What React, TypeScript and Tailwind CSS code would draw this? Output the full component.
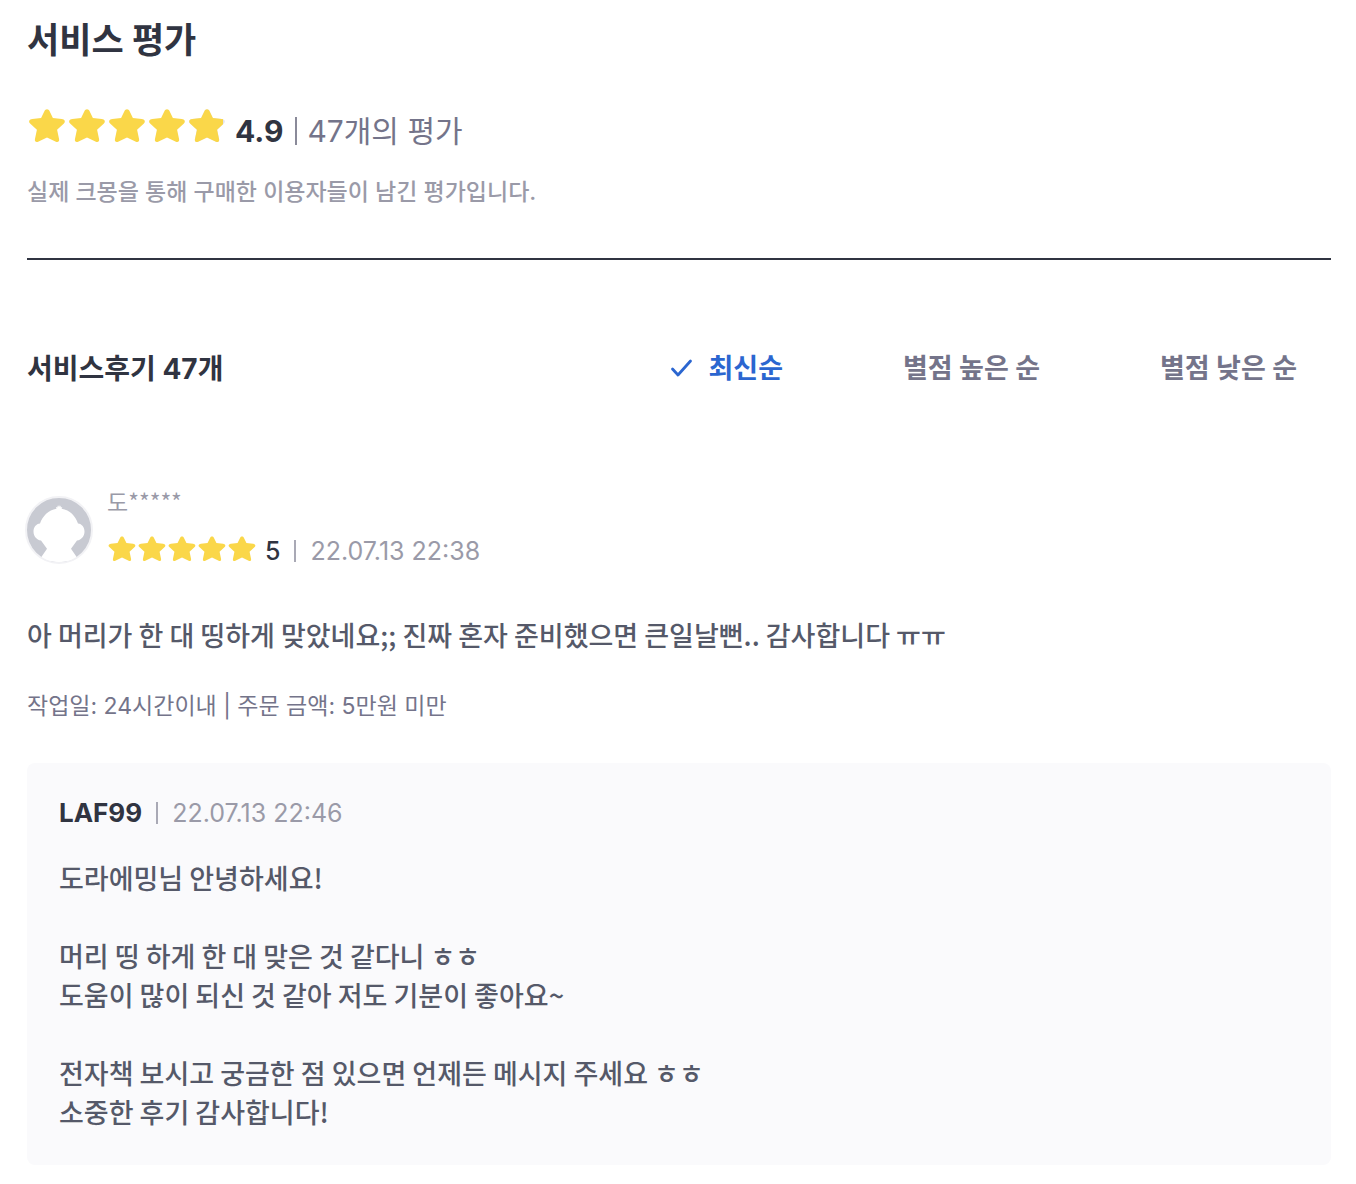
import { useState } from 'react'
import clsx from 'clsx'

const SORTS = [
  { id: 'latest', label: '최신순' },
  { id: 'high', label: '별점 높은 순' },
  { id: 'low', label: '별점 낮은 순' },
]

const REPLY = `도라에밍님 안녕하세요!

머리 띵 하게 한 대 맞은 것 같다니 ㅎㅎ
도움이 많이 되신 것 같아 저도 기분이 좋아요~

전자책 보시고 궁금한 점 있으면 언제든 메시지 주세요 ㅎㅎ
소중한 후기 감사합니다!`

const STAR =
  'M20 3.2c1.2 0 2 .7 2.5 1.8l3.4 7 8.9 1c2.7.3 4.1 2.4 2.100 4.400l-6.800 6.400 2 9.500c.4 2.300-1.300 3.400-3.200 2.500L20 31.400l-8.900 4.400c-1.900.9-3.600-.2-3.200-2.500l2-9.500-6.800-6.400c-2-2-.6-4.100 2.100-4.400l8.900-1L17.500 5c.5-1.100 1.300-1.800 2.500-1.800z'

function Stars({ score, className }: { score: number; className: string }) {
  return (
    <svg viewBox="0 0 200 40" className={className} role="img" aria-label={`별점 ${score}`}>
      <defs>
        <clipPath id={`score-${score}`}>
          <rect width={score * 40} height="40" />
        </clipPath>
      </defs>
      {score < 5 && <path d={STAR} transform="translate(160 0)" fill="#e4e5ed" />}
      <g clipPath={`url(#score-${score})`}>
        {[0, 1, 2, 3, 4].map((i) => (
          <path key={i} d={STAR} transform={`translate(${i * 40} 0)`} fill="#fad749" />
        ))}
      </g>
    </svg>
  )
}

function Avatar() {
  return (
    <svg viewBox="0 0 68 68" className="mt-1.5 -ml-0.5 size-[68px] shrink-0" aria-hidden="true">
      <circle cx="34" cy="34" r="33" fill="#c8cad2" />
      <path
        d="M16 61.5l6-8.700-6-8.300C11.500 44 8.500 40 8.500 35.500c0-4.200 2.500-7.500 6.500-8C17.500 20 23.500 14 31.500 12.700l-.6-1.700 1.500.6.3-2 .8 1.200.5-2.300.6 2.300.9-1.200.3 2 1.500-.6-.7 1.700C45 14 50.500 20 53 27.500c4 .5 6.500 3.800 6.500 8 0 4.500-3 8.500-7.500 9L46 52.800l6 8.700c-8 6-28 6-36 0z"
        fill="#fff"
      />
      <circle cx="34" cy="34" r="33" fill="none" stroke="#f2f2f5" strokeWidth="2" />
    </svg>
  )
}

function Divider() {
  return <span className="mx-3.5 h-[22px] w-0.5 bg-[#a9a9b5]" />
}

export default function App() {
  const [sort, setSort] = useState('latest')

  return (
    <main className="bg-white px-[27px] pt-4 pr-[25px] pb-[19px] font-['Inter','Noto_Sans_CJK_KR',sans-serif] text-[#303441]">
      <h1 className="text-[35px] leading-12 font-bold">서비스 평가</h1>

      <div className="mt-[42px] flex items-center text-[30px] leading-12">
        <Stars score={4.9} className="mb-2.5 h-10 w-[200px]" />
        <strong className="ml-2 font-bold">4.9</strong>
        <span className="mr-2.5 ml-3 h-7 w-0.5 bg-[#8a8a99]" />
        <span className="text-[#74748a]">47개의 평가</span>
      </div>
      <p className="mt-[18px] text-[23px] leading-9 font-medium text-[#9a9aa8]">
        실제 크몽을 통해 구매한 이용자들이 남긴 평가입니다.
      </p>

      <hr className="mt-12 border-t-2 border-[#303441]" />

      <div className="mt-[89px] flex items-center justify-between leading-10 font-bold">
        <h2 className="text-[28px]">서비스후기 47개</h2>
        <div className="mr-[34px] flex gap-[120px] text-[27px]">
          {SORTS.map((s) => (
            <button
              key={s.id}
              type="button"
              onClick={() => setSort(s.id)}
              className={clsx('flex items-center', sort === s.id ? 'text-[#2b66d0]' : 'text-[#74748a]')}
            >
              {sort === s.id && (
                <svg viewBox="0 0 24 24" className="mr-3.5 size-6" fill="none" aria-hidden="true">
                  <path
                    d="M2.500 12l5.500 6L20.500 4"
                    stroke="currentColor"
                    strokeWidth="2.800"
                    strokeLinecap="round"
                    strokeLinejoin="round"
                  />
                </svg>
              )}
              {s.label}
            </button>
          ))}
        </div>
      </div>

      <article className="mt-24">
        <header className="flex items-center gap-3.5">
          <Avatar />
          <div>
            <p className="font-['Noto_Sans_CJK_KR',sans-serif] text-[23px] leading-8 text-[#9a9aa8]">
              도*****
            </p>
            <div className="mt-4 flex items-center text-[25px] leading-9">
              <Stars score={5} className="mb-1 h-[30px] w-[150px]" />
              <span className="ml-2 font-medium">5</span>
              <Divider />
              <time className="text-[#9a9aa8]">22.07.13 22:38</time>
            </div>
          </div>
        </header>

        <p className="mt-[46px] font-['Noto_Sans_CJK_KR',sans-serif] text-[27px] leading-[39px] font-medium text-[#555969]">
          아 머리가 한 대 띵하게 맞았네요;; 진짜 혼자 준비했으면 큰일날뻔.. 감사합니다 ㅠㅠ
        </p>
        <p className="mt-[34px] text-[23px] leading-9 text-[#74748a]">
          작업일: 24시간이내 | 주문 금액: 5만원 미만
        </p>

        <section className="mt-[39px] rounded-lg bg-[#fafafc] px-8 pt-8 pb-[34px]">
          <div className="flex items-center text-[25px] leading-9">
            <strong className="text-[26px] font-bold">LAF99</strong>
            <Divider />
            <time className="text-[#9a9aa8]">22.07.13 22:46</time>
          </div>
          <p className="mt-[27px] font-['Noto_Sans_CJK_KR',sans-serif] text-[27px] leading-[39px] font-medium whitespace-pre-line text-[#555969]">
            {REPLY}
          </p>
        </section>
      </article>
    </main>
  )
}
